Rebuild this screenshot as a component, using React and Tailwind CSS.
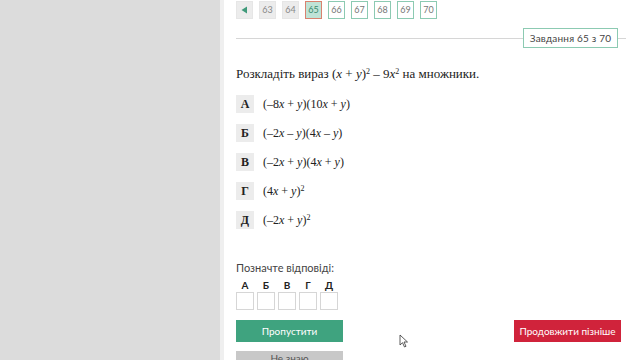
import React from 'react';

const pages = [63, 64, 65, 66, 67, 68, 69, 70];

function pageClass(n) {
    if (n < 65) {
        return 'border border-[#e6e6e6] bg-[#ececec] text-[#888]';
    }
    if (n === 65) {
        return 'border border-[#d9826f] bg-[#bfe3d6] text-[#3a8a6c]';
    }
    return 'border border-[#8ccab2] bg-white text-[#777]';
}

const options = [
    { label: 'А', text: <>(–8<i>x</i> + <i>y</i>)(10<i>x</i> + <i>y</i>)</> },
    { label: 'Б', text: <>(–2<i>x</i> – <i>y</i>)(4<i>x</i> – <i>y</i>)</> },
    { label: 'В', text: <>(–2<i>x</i> + <i>y</i>)(4<i>x</i> + <i>y</i>)</> },
    { label: 'Г', text: <>(4<i>x</i> + <i>y</i>)<sup className="text-[8px]">2</sup></> },
    { label: 'Д', text: <>(–2<i>x</i> + <i>y</i>)<sup className="text-[8px]">2</sup></> },
];

const sans = { fontFamily: 'Lato, "Open Sans", sans-serif' };
const serif = { fontFamily: '"Liberation Serif", serif' };

function App() {
    return (
        <div className="relative flex h-[360px] w-[640px] overflow-hidden bg-white" style={sans}>
            <div className="w-[220px] shrink-0 bg-[#dcdcdc]" />
            <div className="w-[4px] shrink-0 bg-[#efefef]" />
            <div className="flex flex-1 flex-col pl-[12px] pr-[14px]">
                <div className="mt-[1px] flex h-[18px] items-center gap-[6px]">
                    <div className="flex h-[18px] w-[17px] items-center justify-center border border-[#e6e6e6] bg-[#ececec]">
                        <svg width="7" height="8" viewBox="0 0 7 8">
                            <path d="M6 0.5 L0.5 4 L6 7.5 Z" fill="#3f9a7a" />
                        </svg>
                    </div>
                    {pages.map((n) => (
                        <div
                            key={n}
                            className={`flex h-[18px] w-[17px] items-center justify-center text-[9px] ${pageClass(n)}`}
                        >
                            {n}
                        </div>
                    ))}
                </div>

                <div className="mt-[9px] flex h-[20px] items-center">
                    <div className="h-px flex-1 bg-[#d6d6d6]" />
                    <div className="flex h-[20px] w-[95px] items-center justify-center border border-[#8ccab2] text-[10px] tracking-[0.2px] text-[#444]">
                        Завдання 65 з 70
                    </div>
                    <div className="h-px w-[8px] bg-[#d6d6d6]" />
                </div>

                <div className="mt-[18px] text-[13px] leading-[16px] text-[#222]" style={serif}>
                    Розкладіть вираз (<i>x</i> + <i>y</i>)<sup className="text-[8px]">2</sup> – 9<i>x</i><sup className="text-[8px]">2</sup> на множники.
                </div>

                <div className="mt-[13px] flex flex-col gap-[11px]" style={serif}>
                    {options.map((option) => (
                        <div key={option.label} className="flex h-[18px] items-center">
                            <div className="flex h-[18px] w-[18px] items-center justify-center bg-[#ececec] text-[12px] font-bold text-[#222]">
                                {option.label}
                            </div>
                            <div className="ml-[9px] text-[12px] text-[#222]">{option.text}</div>
                        </div>
                    ))}
                </div>

                <div className="mt-[32px] text-[11px] leading-[14px] text-[#444]">Позначте відповіді:</div>
                <div className="mt-[4px] flex gap-[3px]">
                    {options.map((option) => (
                        <div key={option.label} className="flex w-[18px] flex-col items-center">
                            <div className="text-[10px] font-bold leading-[12px] text-[#222]">{option.label}</div>
                            <div className="mt-[1px] h-[18px] w-[18px] border border-[#d6d6d6] bg-white" />
                        </div>
                    ))}
                </div>

                <div className="mt-[10px] flex items-start justify-between pr-[5px]">
                    <div className="flex h-[22px] w-[107px] items-center justify-center bg-[#3fa37f] text-[10px] text-white">
                        Пропустити
                    </div>
                    <div className="flex h-[22px] w-[107px] items-center justify-center bg-[#d0233b] text-[10px] text-white">
                        Продовжити пізніше
                    </div>
                </div>
                <div className="mt-[9px] flex h-[22px] w-[107px] items-center justify-center bg-[#c8c8c8] text-[10px] text-[#555]">
                    Не знаю
                </div>
            </div>

            <svg className="absolute left-[399px] top-[334px]" width="10" height="14" viewBox="0 0 10 14">
                <path d="M1 1 L1 11 L3.5 8.7 L5.5 13 L7 12.3 L5 8 L8.5 8 Z" fill="white" stroke="#333" strokeWidth="0.8" />
            </svg>
        </div>
    );
}

export default App;
